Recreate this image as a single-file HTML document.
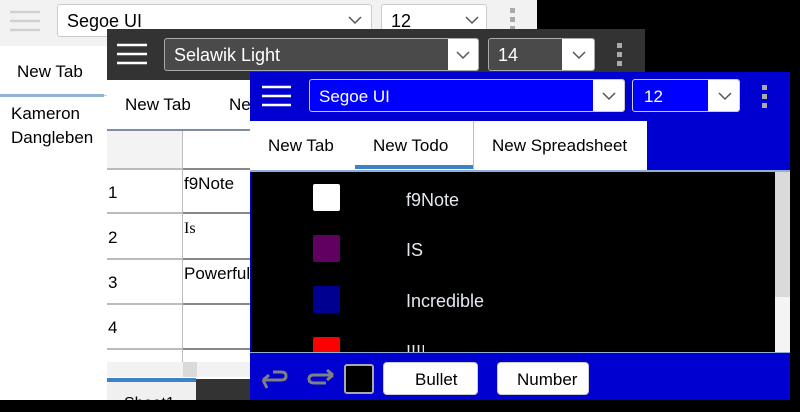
<!DOCTYPE html>
<html><head><meta charset="utf-8"><style>
*{margin:0;padding:0;box-sizing:border-box}
body{width:800px;height:400px;background:#000;position:relative;overflow:hidden;font-family:"Liberation Sans",sans-serif;font-size:16px;color:#000}
.a{position:absolute}
.t{position:absolute;white-space:nowrap;line-height:1}
</style></head><body>
<div class="a" style="left:0;top:0;width:537px;height:400px;background:#fff">
 <div class="a" style="left:0;top:0;width:537px;height:46px;background:#f2f2f2"></div>
 <svg class="a" style="left:10px;top:10px" width="30" height="22"><g stroke="#d0d0d0" stroke-width="2.5"><line x1="0" y1="2" x2="30" y2="2"/><line x1="0" y1="11" x2="30" y2="11"/><line x1="0" y1="20" x2="30" y2="20"/></g></svg>
 <div class="a" style="left:57px;top:4px;width:315px;height:33px;background:#fff;border:1px solid #ccc;border-radius:3px"></div>
 <div class="t" style="left:67px;top:12px;font-size:18px">Segoe UI</div>
 <svg class="a" style="left:348px;top:16px" width="14" height="9"><polyline points="1,1 7,7 13,1" fill="none" stroke="#555" stroke-width="1.5"/></svg>
 <div class="a" style="left:381px;top:4px;width:106px;height:33px;background:#fff;border:1px solid #ccc;border-radius:3px"></div>
 <div class="t" style="left:391px;top:12px;font-size:18px">12</div>
 <svg class="a" style="left:465px;top:16px" width="14" height="9"><polyline points="1,1 7,7 13,1" fill="none" stroke="#555" stroke-width="1.5"/></svg>
 <div class="t" style="left:17px;top:63px;font-size:17px">New Tab</div>
 <div class="a" style="left:0;top:94px;width:104px;height:3px;background:#8fb4d8"></div>
 <div class="a" style="left:104px;top:95px;width:440px;height:1px;background:#ccc"></div>
 <div class="t" style="left:11px;top:105px;font-size:17px">Kameron</div>
 <div class="t" style="left:11px;top:129px;font-size:17px">Dangleben</div>
</div>
<svg class="a" style="left:510px;top:8px" width="6" height="24"><g fill="#aaa"><rect x="0" y="0" width="5" height="5"/><rect x="0" y="9" width="5" height="5"/><rect x="0" y="18" width="5" height="5"/></g></svg>
<div class="a" style="left:107px;top:29px;width:538px;height:371px;background:#fff">
 <div class="a" style="left:0;top:0;width:538px;height:51px;background:#333"></div>
</div>
<svg class="a" style="left:117px;top:43px" width="30" height="22"><g stroke="#fff" stroke-width="2.5"><line x1="0" y1="2" x2="30" y2="2"/><line x1="0" y1="11" x2="30" y2="11"/><line x1="0" y1="20" x2="30" y2="20"/></g></svg>
<div class="a" style="left:164px;top:38px;width:315px;height:33px;background:#4a4a4a;border:1px solid #aaa;border-radius:3px;overflow:hidden"><div class="a" style="right:0;top:0;width:30px;height:33px;background:#fff"></div></div>
<div class="t" style="left:174px;top:46px;font-size:18px;color:#fff">Selawik Light</div>
<svg class="a" style="left:456px;top:51px" width="14" height="9"><polyline points="1,1 7,7 13,1" fill="none" stroke="#555" stroke-width="1.5"/></svg>
<div class="a" style="left:488px;top:38px;width:107px;height:33px;background:#4a4a4a;border:1px solid #aaa;border-radius:3px;overflow:hidden"><div class="a" style="right:0;top:0;width:32px;height:33px;background:#fff"></div></div>
<div class="t" style="left:498px;top:46px;font-size:18px;color:#fff">14</div>
<svg class="a" style="left:572px;top:51px" width="14" height="9"><polyline points="1,1 7,7 13,1" fill="none" stroke="#555" stroke-width="1.5"/></svg>
<svg class="a" style="left:617px;top:43px" width="6" height="24"><g fill="#aaa"><rect x="0" y="0" width="5" height="5"/><rect x="0" y="9" width="5" height="5"/><rect x="0" y="18" width="5" height="5"/></g></svg>
<div class="t" style="left:125px;top:96px;font-size:17px">New Tab</div>
<div class="t" style="left:229px;top:96px;font-size:17px">Ne</div>
<div class="a" style="left:107px;top:129px;width:145px;height:2px;background:#7d8fa8"></div>
<div class="a" style="left:107px;top:131px;width:75px;height:38px;background:#f3f3f3"></div>
<div class="a" style="left:107px;top:168px;width:145px;height:2px;background:#bbb"></div>
<div class="a" style="left:182px;top:131px;width:1px;height:231px;background:#bbb"></div>
<div class="a" style="left:107px;top:212px;width:145px;height:2px;background:#bbb"></div>
<div class="a" style="left:107px;top:258px;width:145px;height:2px;background:#bbb"></div>
<div class="a" style="left:107px;top:303px;width:145px;height:2px;background:#bbb"></div>
<div class="a" style="left:107px;top:348px;width:145px;height:2px;background:#bbb"></div>
<div class="a" style="left:183px;top:168px;width:69px;height:2px;background:#888"></div>
<div class="a" style="left:183px;top:212px;width:69px;height:2px;background:#888"></div>
<div class="a" style="left:183px;top:258px;width:69px;height:2px;background:#888"></div>
<div class="a" style="left:183px;top:303px;width:69px;height:2px;background:#888"></div>
<div class="a" style="left:183px;top:348px;width:69px;height:2px;background:#888"></div>
<div class="t" style="left:108px;top:184px;font-size:17px">1</div>
<div class="t" style="left:108px;top:229px;font-size:17px">2</div>
<div class="t" style="left:108px;top:274px;font-size:17px">3</div>
<div class="t" style="left:108px;top:319px;font-size:17px">4</div>
<div class="t" style="left:184px;top:175px;font-size:17px">f9Note</div>
<div class="t" style="left:184px;top:221px;font-family:'Liberation Serif',serif;font-size:16px">Is</div>
<div class="t" style="left:184px;top:265px;font-size:17px">Powerful</div>
<div class="a" style="left:107px;top:362px;width:145px;height:15px;background:#f2f2f2"></div>
<div class="a" style="left:183px;top:362px;width:14px;height:15px;background:#dadada"></div>
<div class="a" style="left:107px;top:378px;width:89px;height:4px;background:#3c82c4"></div>
<div class="a" style="left:196px;top:379px;width:60px;height:21px;background:#333"></div>
<div class="a" style="left:107px;top:382px;width:89px;height:18px;background:#f0f0f0"></div>
<div class="t" style="left:124px;top:396px;font-size:16px">Sheet1</div>
<div class="a" style="left:250px;top:72px;width:540px;height:328px;background:#0000d0"></div>
<svg class="a" style="left:262px;top:85px" width="30" height="22"><g stroke="#fff" stroke-width="2.5"><line x1="0" y1="2" x2="29" y2="2"/><line x1="0" y1="11" x2="29" y2="11"/><line x1="0" y1="20" x2="29" y2="20"/></g></svg>
<div class="a" style="left:309px;top:79px;width:316px;height:33px;background:#00f;border:1px solid #ccc;border-radius:3px;overflow:hidden"><div class="a" style="right:0;top:0;width:31px;height:33px;background:#fff"></div></div>
<div class="t" style="left:319px;top:88px;font-size:17px;color:#fff">Segoe UI</div>
<svg class="a" style="left:602px;top:92px" width="14" height="9"><polyline points="1,1 7,7 13,1" fill="none" stroke="#555" stroke-width="1.5"/></svg>
<div class="a" style="left:632px;top:79px;width:108px;height:33px;background:#00f;border:1px solid #ccc;border-radius:3px;overflow:hidden"><div class="a" style="right:0;top:0;width:31px;height:33px;background:#fff"></div></div>
<div class="t" style="left:644px;top:88px;font-size:17px;color:#fff">12</div>
<svg class="a" style="left:718px;top:92px" width="14" height="9"><polyline points="1,1 7,7 13,1" fill="none" stroke="#555" stroke-width="1.5"/></svg>
<svg class="a" style="left:762px;top:85px" width="6" height="24"><g fill="#aaa"><rect x="0" y="0" width="5" height="5"/><rect x="0" y="9" width="5" height="5"/><rect x="0" y="18" width="5" height="5"/></g></svg>
<div class="a" style="left:250px;top:121px;width:397px;height:49px;background:#fff"></div>
<div class="a" style="left:473px;top:121px;width:1px;height:49px;background:#b8bce0"></div>
<div class="t" style="left:268px;top:137px;font-size:17px">New Tab</div>
<div class="t" style="left:373px;top:137px;font-size:17px">New Todo</div>
<div class="t" style="left:492px;top:137px;font-size:17px">New Spreadsheet</div>
<div class="a" style="left:355px;top:165px;width:118px;height:4px;background:#3c82c4"></div>
<div class="a" style="left:250px;top:170px;width:540px;height:2px;background:#8faed8"></div>
<div class="a" style="left:251px;top:172px;width:524px;height:180px;background:#000"></div>
<div class="a" style="left:775px;top:172px;width:15px;height:180px;background:#f4f4f4"></div>
<div class="a" style="left:775px;top:172px;width:15px;height:125px;background:#dadada"></div>
<div class="a" style="left:250px;top:352px;width:540px;height:1px;background:#8faed8"></div>
<div class="a" style="left:251px;top:353px;width:539px;height:47px;background:#0000d0"></div>
<div class="a" style="left:313px;top:184px;width:27px;height:27px;background:#fff;border-radius:2px"></div>
<div class="a" style="left:313px;top:235px;width:27px;height:27px;background:#600060;border-radius:2px"></div>
<div class="a" style="left:313px;top:286px;width:27px;height:27px;background:#000090;border-radius:2px"></div>
<div class="a" style="left:313px;top:337px;width:27px;height:15px;background:#f00;border-radius:2px 2px 0 0"></div>
<div class="t" style="left:406px;top:191px;font-size:18px;color:#e4e8f0">f9Note</div>
<div class="t" style="left:406px;top:241px;font-size:18px;color:#e4e8f0">IS</div>
<div class="t" style="left:406px;top:292px;font-size:18px;color:#e4e8f0">Incredible</div>
<div class="a" style="left:406px;top:343px;width:18px;height:9px;overflow:hidden"><div class="t" style="left:0;top:0;font-size:18px;color:#e4e8f0">!!!!</div></div>
<svg class="a" style="left:259px;top:368px" width="30" height="24"><path d="M4 12 H22 Q27 12 27 8 Q27 4 22 4 H14 M4 12 L10 7 M4 12 L8 20" fill="none" stroke="#808080" stroke-width="3"/></svg>
<svg class="a" style="left:306px;top:367px" width="30" height="22"><path d="M27 8 H8 Q3 8 3 12 Q3 16 8 16 H20 M27 8 L21 3 M27 8 L21 13" fill="none" stroke="#808080" stroke-width="3"/></svg>
<div class="a" style="left:344px;top:364px;width:30px;height:30px;background:#000;border:2px solid #aaa;border-radius:3px"></div>
<div class="a" style="left:383px;top:362px;width:95px;height:33px;background:#fff;border:1px solid #ccc;border-radius:4px"></div>
<div class="t" style="left:415px;top:371px;font-size:17px">Bullet</div>
<div class="a" style="left:497px;top:362px;width:92px;height:33px;background:#fff;border:1px solid #ccc;border-radius:4px"></div>
<div class="t" style="left:517px;top:371px;font-size:17px">Number</div>
</body></html>
